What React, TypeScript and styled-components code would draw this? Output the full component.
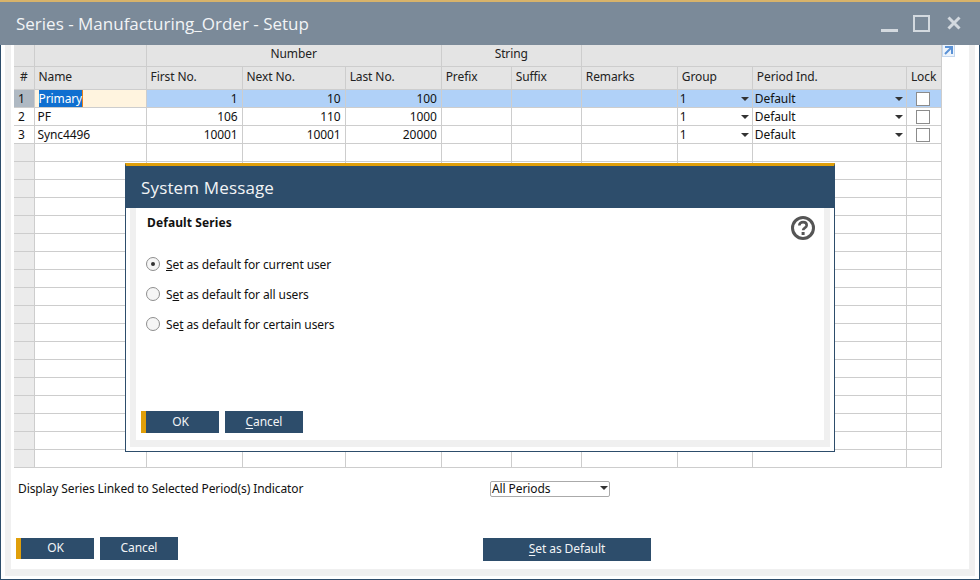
import React from 'react';
import styled, { createGlobalStyle } from 'styled-components';

const GlobalStyle = createGlobalStyle`
    html, body {
        margin: 0;
        padding: 0;
        width: 980px;
        height: 580px;
        overflow: hidden;
        background: #fff;
    }
`;

const NAVY = '#2d4d6b';
const GOLD = '#e09f0a';
const LINE = '#cdcdcd';
const RING = '#f0f0f0';

const Window = styled.div`
    position: relative;
    width: 980px;
    height: 580px;
    box-sizing: border-box;
    display: flex;
    flex-direction: column;
    border-left: 1px solid ${NAVY};
    border-right: 1px solid ${NAVY};
    border-bottom: 1px solid ${NAVY};
    background: #fff;
    font-family: "Noto Sans", "DejaVu Sans", sans-serif;
    font-size: 12px;
    letter-spacing: -0.1px;
    color: #111;
`;

const TitleBar = styled.div`
    box-sizing: border-box;
    height: 45px;
    flex: none;
    margin: 0 -1px;
    border-top: 2px solid #d8b36a;
    background: #7b8a99;
    color: #f2f4f6;
    display: flex;
    align-items: center;
    justify-content: space-between;
    padding: 0 15px 0 16px;
    font-family: "Open Sans", sans-serif;
    font-size: 17px;
    letter-spacing: 0;
`;

const TitleIcons = styled.div`
    display: flex;
    align-items: center;
    gap: 15px;
    margin-right: 4px;
    margin-top: -1px;
`;

const CloseGlyph = styled.svg`
    margin-left: 2px;
`;

const Body = styled.div`
    flex: 1;
    margin: 0 4px 3px;
    padding-left: 3px;
    background: #fff;
    border-left: 6px solid ${RING};
    border-right: 6px solid ${RING};
    border-bottom: 7px solid ${RING};
    display: flex;
    flex-direction: column;
    min-height: 0;
`;

const GridWrap = styled.div`
    position: relative;
    width: 928px;
`;

const Grid = styled.table`
    border-collapse: collapse;
    table-layout: fixed;
    width: 928px;
    border-right: 1px solid ${LINE};
    border-bottom: 1px solid ${LINE};
`;

const HeadCell = styled.th<{ $align?: string }>`
    box-sizing: border-box;
    height: 23px;
    padding: 0 4px 3px;
    font-weight: normal;
    text-align: ${p => p.$align ?? 'left'};
    background: #e4e4e4;
    border-right: 1px solid ${LINE};
    border-bottom: 1px solid ${LINE};
    color: #222;
`;

const BandCell = styled(HeadCell)`
    height: 21px;
    padding-bottom: 4px;
`;

const IndexCell = styled.td<{ $active?: boolean; $empty?: boolean }>`
    box-sizing: border-box;
    height: 18px;
    padding: 0 4px;
    background: ${p => (p.$active ? '#afb9c3' : p.$empty ? '#ebebeb' : '#fff')};
    border-right: 1px solid ${LINE};
    border-bottom: 1px solid ${LINE};
`;

const Cell = styled.td<{ $selected?: boolean; $right?: boolean; $focus?: boolean }>`
    box-sizing: border-box;
    height: 18px;
    padding: 0 ${p => (p.$right ? '4px' : '3px')} 0 2px;
    overflow: hidden;
    white-space: nowrap;
    text-align: ${p => (p.$right ? 'right' : 'left')};
    background: ${p => (p.$focus ? '#fff4df' : p.$selected ? '#b0d1f8' : '#fff')};
    border-right: 1px solid ${LINE};
    border-bottom: 1px solid ${LINE};
`;

const NameCell = styled(Cell)`
    padding-left: 3px;
`;

const SelectedText = styled.span`
    background: #0f6fd0;
    color: #fff;
    margin-left: 1px;
    border-right: 1px solid #e8801a;
`;

const DropCell = styled.div`
    display: flex;
    align-items: center;
    justify-content: space-between;
`;

const Caret = styled.span`
    width: 0;
    height: 0;
    border-left: 4px solid transparent;
    border-right: 4px solid transparent;
    border-top: 4px solid #333;
`;

const Check = styled.span`
    display: block;
    width: 14px;
    height: 14px;
    box-sizing: border-box;
    margin-left: 7px;
    background: #fff;
    border: 1px solid #8c8c8c;
`;

const LinkArrow = styled.svg`
    position: absolute;
    left: 928px;
    top: 0;
`;

const FilterRow = styled.div`
    display: flex;
    align-items: center;
    height: 20px;
    margin-top: 11px;
    padding-left: 4px;
`;

const FilterLabel = styled.div`
    width: 472px;
    padding-bottom: 2px;
`;

const PeriodSelect = styled.div`
    box-sizing: border-box;
    width: 120px;
    height: 16px;
    padding: 0 1px 2px 1px;
    border: 1px solid #aaa;
    border-radius: 2px;
    display: flex;
    align-items: center;
    justify-content: space-between;
    color: #111;
`;

const ActionRow = styled.div`
    display: flex;
    align-items: flex-start;
    margin-top: 38px;
    padding-left: 2px;
`;

const ActionButton = styled.button<{ $primary?: boolean }>`
    box-sizing: border-box;
    width: 78px;
    height: 22px;
    padding: 0 ${p => (p.$primary ? '4px' : '0')} 2px 0;
    border: none;
    border-left: ${p => (p.$primary ? `5px solid ${GOLD}` : 'none')};
    background: ${NAVY};
    color: #f2f4f6;
    font: inherit;
    letter-spacing: inherit;
    u {
        text-underline-offset: 2px;
    }
`;

const WindowOk = styled(ActionButton)`
    height: 21px;
    margin-top: 1px;
`;

const WindowCancel = styled(ActionButton)`
    height: 23px;
    margin-left: 6px;
`;

const SetDefault = styled(ActionButton)`
    width: 168px;
    height: 23px;
    margin-top: 1px;
    margin-left: 305px;
`;

const Dialog = styled.div`
    position: absolute;
    left: 124px;
    top: 163px;
    box-sizing: border-box;
    width: 710px;
    height: 289px;
    display: flex;
    flex-direction: column;
    background: #fff;
    border: 1px solid ${NAVY};
    border-top: 3px solid ${GOLD};
`;

const DialogHeader = styled.div`
    height: 42px;
    flex: none;
    margin: 0 -1px;
    background: ${NAVY};
    color: #f2f4f6;
    display: flex;
    align-items: center;
    padding-left: 16px;
    box-sizing: border-box;
    font-family: "Open Sans", sans-serif;
    font-size: 17px;
    letter-spacing: 0.15px;
`;

const DialogBody = styled.div`
    position: relative;
    flex: 1;
    margin: 0 4px 4px;
    padding: 7px 11px 0;
    background: #fff;
    border-left: 6px solid ${RING};
    border-right: 6px solid ${RING};
    border-bottom: 7px solid ${RING};
    display: flex;
    flex-direction: column;
`;

const DialogTitle = styled.div`
    font-weight: bold;
    height: 16px;
    line-height: 16px;
    letter-spacing: 0.1px;
`;

const RadioList = styled.div`
    display: flex;
    flex-direction: column;
    gap: 14px;
    margin: 25px 0 0 -1px;
`;

const RadioRow = styled.div`
    display: flex;
    align-items: center;
    height: 16px;
    gap: 6px;
`;

const Radio = styled.span<{ $on?: boolean }>`
    box-sizing: border-box;
    width: 14px;
    height: 14px;
    border-radius: 50%;
    border: 1px solid #8e8e8e;
    background: #f6f6f6;
    display: flex;
    align-items: center;
    justify-content: center;
    &::after {
        content: '';
        width: 4px;
        height: 4px;
        border-radius: 50%;
        background: ${p => (p.$on ? '#333' : 'transparent')};
    }
`;

const HelpIcon = styled.svg`
    position: absolute;
    right: 8px;
    top: 7px;
`;

const DialogActions = styled.div`
    margin-top: auto;
    margin-bottom: 7px;
    margin-left: -6px;
    display: flex;
    gap: 6px;
`;

const rows = [
    { id: 1, name: 'Primary', first: '1', next: '10', last: '100' },
    { id: 2, name: 'PF', first: '106', next: '110', last: '1000' },
    { id: 3, name: 'Sync4496', first: '10001', next: '10001', last: '20000' },
];

const widths = [20, 112, 96, 103, 96, 70, 70, 96, 75, 154, 35];
const emptyRows = Array.from({ length: 18 }, (_, i) => i);

const App: React.FC = () => (
    <Window>
        <GlobalStyle />
        <TitleBar>
            <span>Series - Manufacturing_Order - Setup</span>
            <TitleIcons>
                <svg width="17" height="17" viewBox="0 0 17 17"><rect x="0" y="14" width="17" height="3" fill="#d3d9df" /></svg>
                <svg width="17" height="17" viewBox="0 0 17 17"><rect x="1" y="1" width="15" height="15" fill="none" stroke="#d3d9df" strokeWidth="2" /></svg>
                <CloseGlyph width="14" height="14" viewBox="0 0 14 14"><path d="M1.5 1.5l11 11M12.5 1.5l-11 11" stroke="#d3d9df" strokeWidth="3" /></CloseGlyph>
            </TitleIcons>
        </TitleBar>
        <Body>
            <GridWrap>
                <Grid>
                    <colgroup>
                        {widths.map((w, i) => <col key={i} style={{ width: w }} />)}
                    </colgroup>
                    <thead>
                        <tr>
                            <BandCell />
                            <BandCell />
                            <BandCell colSpan={3} $align="center">Number</BandCell>
                            <BandCell colSpan={2} $align="center">String</BandCell>
                            <BandCell colSpan={4} />
                        </tr>
                        <tr>
                            <HeadCell $align="center">#</HeadCell>
                            <HeadCell>Name</HeadCell>
                            <HeadCell>First No.</HeadCell>
                            <HeadCell>Next No.</HeadCell>
                            <HeadCell>Last No.</HeadCell>
                            <HeadCell>Prefix</HeadCell>
                            <HeadCell>Suffix</HeadCell>
                            <HeadCell>Remarks</HeadCell>
                            <HeadCell>Group</HeadCell>
                            <HeadCell>Period Ind.</HeadCell>
                            <HeadCell>Lock</HeadCell>
                        </tr>
                    </thead>
                    <tbody>
                        {rows.map((r, i) => {
                            const sel = i === 0;
                            return (
                                <tr key={r.id}>
                                    <IndexCell $active={sel}>{r.id}</IndexCell>
                                    <NameCell $focus={sel}>{sel ? <SelectedText>{r.name}</SelectedText> : r.name}</NameCell>
                                    <Cell $selected={sel} $right>{r.first}</Cell>
                                    <Cell $selected={sel} $right>{r.next}</Cell>
                                    <Cell $selected={sel} $right>{r.last}</Cell>
                                    <Cell $selected={sel} />
                                    <Cell $selected={sel} />
                                    <Cell $selected={sel} />
                                    <Cell $selected={sel}><DropCell>1<Caret /></DropCell></Cell>
                                    <Cell $selected={sel}><DropCell>Default<Caret /></DropCell></Cell>
                                    <Cell $selected={sel}><Check /></Cell>
                                </tr>
                            );
                        })}
                        {emptyRows.map(i => (
                            <tr key={i}>
                                <IndexCell $empty />
                                {widths.slice(1).map((_, c) => <Cell key={c} />)}
                            </tr>
                        ))}
                    </tbody>
                </Grid>
                <LinkArrow width="13" height="12" viewBox="0 0 13 12">
                    <rect x="0.5" y="-1" width="12" height="12.5" fill="#eef4fb" stroke="#c4d7ee" />
                    <path d="M3 2h7v7M10 2L3 9" fill="none" stroke="#5b92d6" strokeWidth="2" />
                </LinkArrow>
            </GridWrap>
            <FilterRow>
                <FilterLabel>Display Series Linked to Selected Period(s) Indicator</FilterLabel>
                <PeriodSelect>All Periods<Caret /></PeriodSelect>
            </FilterRow>
            <ActionRow>
                <WindowOk $primary>OK</WindowOk>
                <WindowCancel>Cancel</WindowCancel>
                <SetDefault><u>S</u>et as Default</SetDefault>
            </ActionRow>
        </Body>
        <Dialog>
            <DialogHeader>System Message</DialogHeader>
            <DialogBody>
                <DialogTitle>Default Series</DialogTitle>
                <HelpIcon width="26" height="26" viewBox="0 0 26 26">
                    <circle cx="13" cy="13" r="10.5" fill="none" stroke="#555" strokeWidth="3" />
                    <path d="M9.3 10.6c0-2.2 1.7-3.5 3.8-3.5s3.6 1.3 3.6 3.1c0 2.7-3.6 2.5-3.6 5" fill="none" stroke="#555" strokeWidth="2.6" />
                    <rect x="11.6" y="17" width="3" height="3" fill="#555" />
                </HelpIcon>
                <RadioList>
                    <RadioRow><Radio $on /><span><u>S</u>et as default for current user</span></RadioRow>
                    <RadioRow><Radio /><span>S<u>e</u>t as default for all users</span></RadioRow>
                    <RadioRow><Radio /><span>Se<u>t</u> as default for certain users</span></RadioRow>
                </RadioList>
                <DialogActions>
                    <ActionButton $primary>OK</ActionButton>
                    <ActionButton><u>C</u>ancel</ActionButton>
                </DialogActions>
            </DialogBody>
        </Dialog>
    </Window>
);

export default App;
